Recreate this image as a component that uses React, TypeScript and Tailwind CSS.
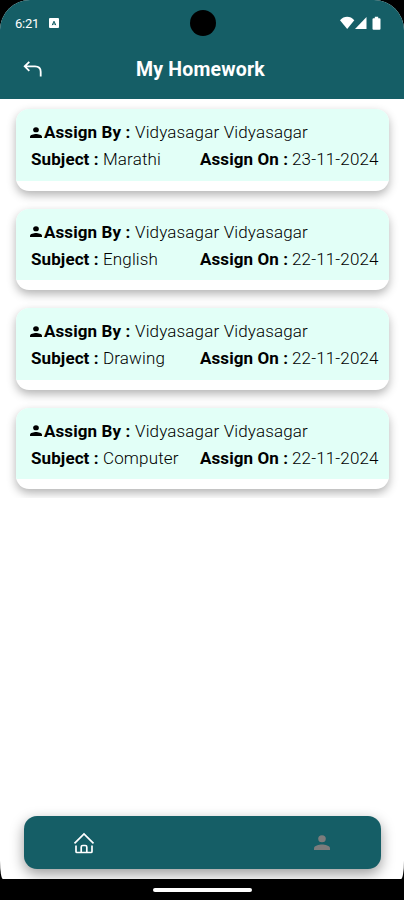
const homeworkList = [
  { id: 1, assignBy: 'Vidyasagar Vidyasagar', subject: 'Marathi', assignOn: '23-11-2024' },
  { id: 2, assignBy: 'Vidyasagar Vidyasagar', subject: 'English', assignOn: '22-11-2024' },
  { id: 3, assignBy: 'Vidyasagar Vidyasagar', subject: 'Drawing', assignOn: '22-11-2024' },
  { id: 4, assignBy: 'Vidyasagar Vidyasagar', subject: 'Computer', assignOn: '22-11-2024' },
];

function PersonIcon(props: { className: string }) {
  return (
    <svg viewBox="0 0 16 16" fill="currentColor" preserveAspectRatio="none" className={props.className}>
      <circle cx="8" cy="4" r="3.800" />
      <path d="M0 16v-1.800c0-2.700 5-4 8-4s8 1.300 8 4V16z" />
    </svg>
  );
}

function StatusBar() {
  return (
    <div className="relative flex h-[46px] items-center justify-between pl-[15px] pr-[22px]">
      <div className="flex items-center gap-[9px] text-white">
        <span className="w-[25px] text-[13px] leading-none tracking-[-0.25px]">6:21</span>
        <svg viewBox="0 0 10 10" className="h-[10px] w-[10px]">
          <rect width="10" height="10" rx="1" fill="#fff" />
          <path d="M3.200 7.200 5 3.200l1.800 4M4 6h2" fill="none" stroke="#155e66" strokeWidth="1" />
        </svg>
      </div>
      <div className="absolute left-[190px] top-[10px] h-[26px] w-[26px] rounded-full bg-black" />
      <svg viewBox="0 0 42 14" fill="#fff" className="h-[14px] w-[42px]">
        <path d="M0 4.300C4-.3 10.300-.3 14.300 4.300L7.200 13z" />
        <path d="M26.500 1v12H15z" />
        <path d="M34.800.8h3.400v1.400h1.300q1 0 1 1v9.500q0 1-1 1h-6q-1 0-1-1V3.200q0-1 1-1h1.300z" />
      </svg>
    </div>
  );
}

function Header() {
  return (
    <header className="h-[99px] shrink-0 bg-[#155e66]">
      <StatusBar />
      <div className="flex h-[47px] items-center pl-[23px]">
        <svg viewBox="0 0 20 18" fill="none" stroke="#fff" strokeWidth="1.800" className="h-[18px] w-[20px]">
          <path d="M6.300 0.800 1.700 5.300l4.600 4.500M1.700 5.300H12q5.700 0 5.700 5.500v4.800" />
        </svg>
        <h1 className="ml-[93px] whitespace-nowrap pt-px text-[19.500px] font-bold leading-none tracking-[0.18px] text-white">
          My Homework
        </h1>
      </div>
    </header>
  );
}

function HomeworkCard(props: { assignBy: string; subject: string; assignOn: string }) {
  return (
    <div className="h-[81.500px] shrink-0 overflow-hidden rounded-[13px] bg-white shadow-[0_4px_10px_rgba(0,0,0,0.3)]">
      <div className="h-[71.500px] bg-[#e2fff7] pl-[14px] pt-[10px] text-[17px] leading-[27px] text-black">
        <div className="flex items-center whitespace-nowrap">
          <PersonIcon className="mb-px mr-[2px] h-[11px] w-[12px]" />
          <span className="w-[91px] font-bold tracking-[0.1px]">Assign By :</span>
          <span className="font-light tracking-[0.15px]">{props.assignBy}</span>
        </div>
        <div className="flex whitespace-nowrap pl-[1px]">
          <span className="w-[72px] font-bold tracking-[0.1px]">Subject :</span>
          <span className="w-[97px] font-light tracking-[0.15px]">{props.subject}</span>
          <span className="w-[92px] font-bold tracking-[0.1px]">Assign On :</span>
          <span className="font-light tracking-[0.15px]">{props.assignOn}</span>
        </div>
      </div>
    </div>
  );
}

function BottomNav() {
  return (
    <nav className="ml-[24px] mr-[23px] flex h-[53px] shrink-0 items-center justify-between rounded-[13px] bg-[#155e66] pl-[49px] pr-[51px] shadow-[0_5px_14px_rgba(0,0,0,0.4)]">
      <svg viewBox="0 0 22 22" fill="none" stroke="#fff" strokeWidth="1.700" className="h-[22px] w-[22px]">
        <path d="M1.500 11.300 11 2l9.500 9.300M3 13.500v6q0 1 1 1h14q1 0 1-1v-6" />
        <path d="M8.200 20v-5q0-1.500 1.500-1.500h2.600q1.500 0 1.500 1.500v5" />
      </svg>
      <PersonIcon className="h-[15px] w-[16px] text-[#7c7c7c]" />
    </nav>
  );
}

export default function App() {
  return (
    <div className="flex h-[900px] w-[404px] flex-col overflow-hidden bg-black font-['Roboto',sans-serif]">
      <div className="flex h-[879px] shrink-0 flex-col overflow-hidden rounded-[30px_30px_3px_3px/30px_30px_18px_18px] bg-white">
        <Header />
        <main className="flex h-[399px] shrink-0 flex-col gap-[18px] overflow-hidden pl-[16px] pr-[15px] pt-[10px]">
          {homeworkList.map((item) => (
            <HomeworkCard key={item.id} assignBy={item.assignBy} subject={item.subject} assignOn={item.assignOn} />
          ))}
        </main>
        <div className="mt-auto pb-[10px]">
          <BottomNav />
        </div>
      </div>
      <div className="flex h-[21px] items-center justify-center">
        <div className="h-[4px] w-[99px] rounded-full bg-white" />
      </div>
    </div>
  );
}
